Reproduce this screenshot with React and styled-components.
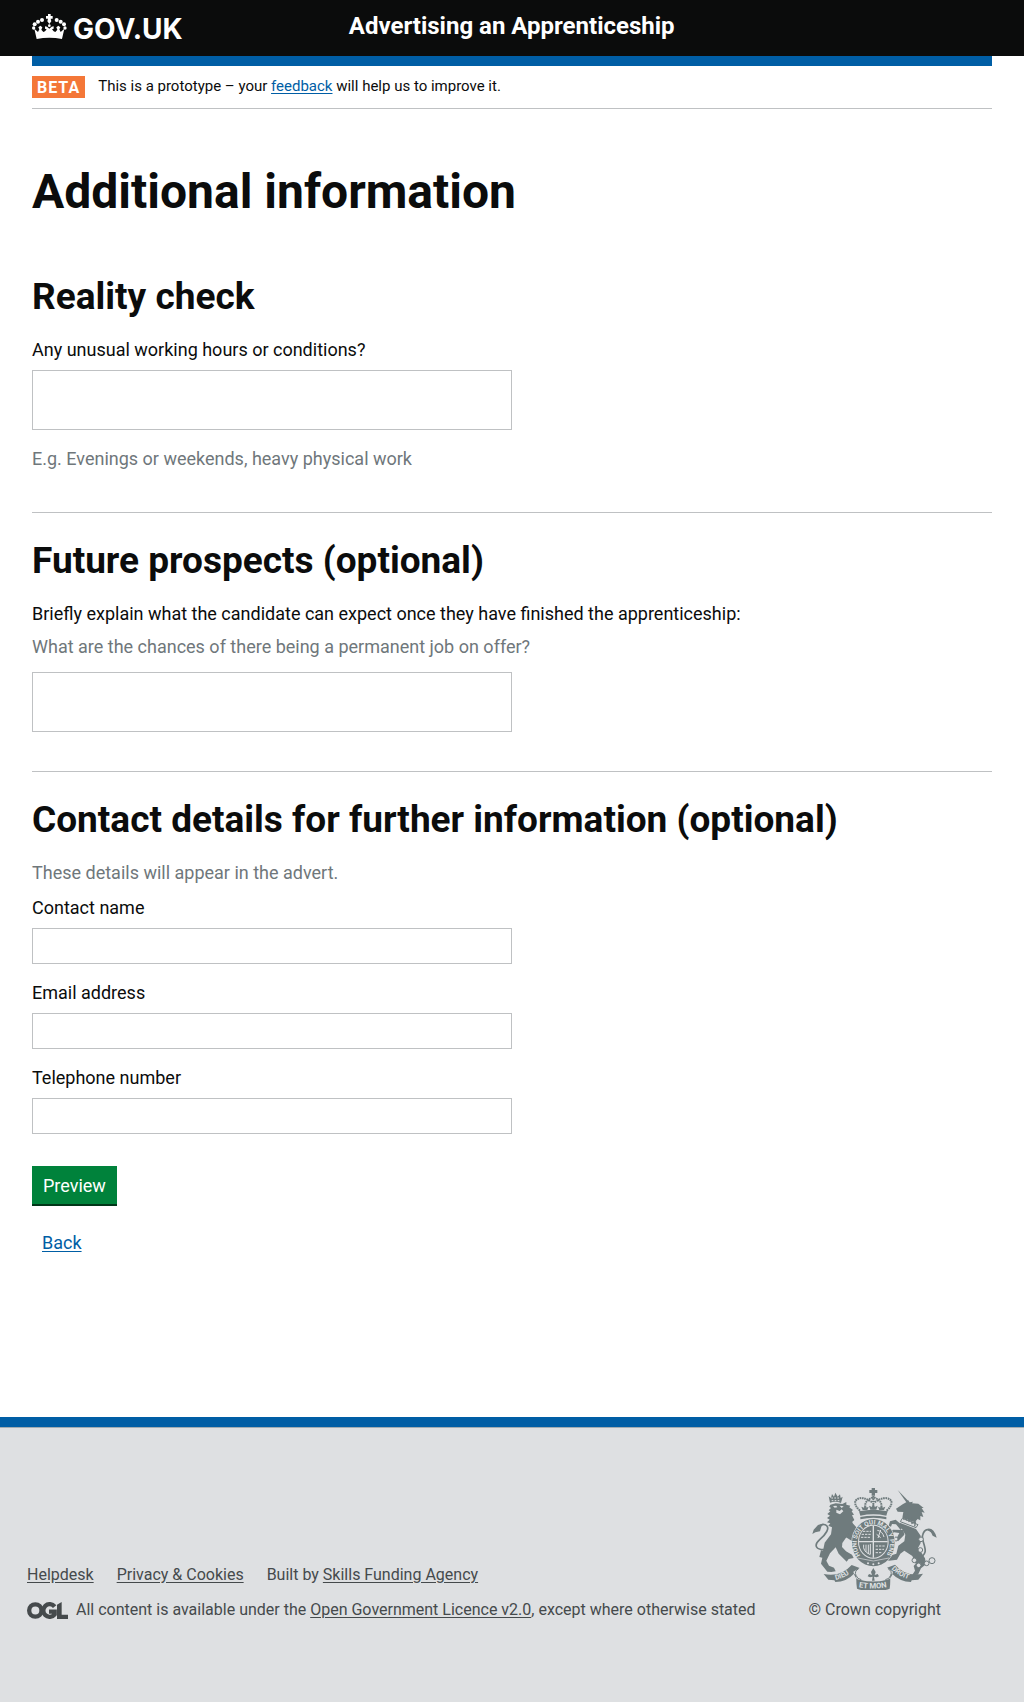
import React from "react";
import styled, { createGlobalStyle } from "styled-components";

const INK = "#0b0c0c";
const BLUE = "#005ea5";
const GREY = "#6f777b";
const RULE = "#bfc1c3";
const FOOT = "#dee0e2";
const CREST = "#6f7b7d";

const GlobalStyle = createGlobalStyle`
  *, *::before, *::after { box-sizing: border-box; }
  body {
    margin: 0;
    background: #fff;
    color: ${INK};
    font: 400 18px/24px Roboto, "Liberation Sans", sans-serif;
  }
  h1, h2, p { margin: 0; }
`;

const Header = styled.header`
  background: ${INK};
  color: #fff;
`;
const Container = styled.div`
  max-width: 960px;
  margin: 0 32px;
  @media (min-width: 1025px) { margin: 0 auto; }
`;
const HeaderInner = styled(Container)`
  display: grid;
  grid-template-columns: 33% 1fr;
  min-height: 56px;
  align-items: start;
`;
const Logo = styled.a`
  display: flex;
  align-items: flex-start;
  gap: 6px;
  padding-top: 14px;
  color: #fff;
  text-decoration: none;
  font: 700 28px/30px Inter, sans-serif;
`;
const ServiceName = styled.a`
  padding-top: 11px;
  color: #fff;
  font-size: 24px;
  font-weight: 700;
  line-height: 30px;
  text-decoration: none;
`;
const Banner = styled.div`
  display: flex;
  align-items: flex-start;
  gap: 13px;
  padding: 10px 0;
  border-top: 10px solid ${BLUE};
  border-bottom: 1px solid ${RULE};
  font-size: 15px;
  line-height: 20px;
`;
const Tag = styled.strong`
  padding: 2px 5px 0 5px;
  background: #f47738;
  color: #fff;
  font-size: 16px;
  line-height: 20px;
  letter-spacing: 1px;
`;
const Link = styled.a`
  color: ${(p) => (p.$plain ? "inherit" : BLUE)};
  text-underline-offset: 2px;
`;
const Title = styled.h1`
  margin-top: 58px;
  font-size: 48px;
  line-height: 50px;
`;
const Section = styled.section`
  padding: ${(p) => (p.$first ? "60px 0 41px" : "28px 0 39px")};
  border-bottom: ${(p) => (p.$last ? "0" : `1px solid ${RULE}`)};
`;
const Heading = styled.h2`
  margin-bottom: 21px;
  font-size: 37px;
  line-height: 40px;
`;
const Field = styled.div`
  display: grid;
  gap: 8px;
  & + & { margin-top: 17px; }
`;
const Label = styled.label`
  justify-self: start;
`;
const Hint = styled.p`
  margin: ${(p) => p.$margin || "0"};
  color: ${GREY};
`;
const Input = styled.input`
  width: 50%;
  height: 36px;
  padding: 5px;
  border: 1px solid ${RULE};
  border-radius: 0;
  background: #fff;
  color: ${INK};
  font: inherit;
`;
const TextArea = styled(Input).attrs({ as: "textarea" })`
  display: block;
  height: 60px;
  resize: none;
`;
const Actions = styled.div`
  display: grid;
  justify-items: start;
  gap: 25px;
  margin: -7px 0 162px;
`;
const Button = styled.button`
  height: 40px;
  padding: 0 11px;
  border: 0;
  background: #00823b;
  box-shadow: inset 0 -2px 0 #003618;
  color: #fff;
  font: inherit;
`;
const BackLink = styled(Link)`
  margin-left: 10px;
`;
const Footer = styled.footer`
  border-top: 10px solid ${BLUE};
  background: ${FOOT};
  color: #454a4c;
  font-size: 16px;
  line-height: 20px;
`;
const FooterInner = styled.div`
  display: flex;
  justify-content: space-between;
  align-items: flex-end;
  max-width: 1024px;
  margin: 0 auto;
  padding: 60px 83px 82px 27px;
`;
const FooterRule = styled.div`
  border-top: 1px solid #a1acb2;
`;
const Meta = styled.div`
  display: grid;
  gap: 15px;
`;
const LinkList = styled.ul`
  display: flex;
  gap: 23px;
  margin: 0;
  padding: 0;
  list-style: none;
`;
const Licence = styled.div`
  display: flex;
  align-items: center;
  gap: 8px;
`;
const Copyright = styled.div`
  display: grid;
  justify-items: center;
  gap: 10px;
`;

function Crown() {
  return (
    <svg width="35" height="26" viewBox="96 42 105 78" fill="#fff" aria-hidden="true">
      <path d="M144 42h8v6h6v8h-6l2 8-6 8-6-8 2-8h-6v-8h6z" />
      <circle cx="126" cy="60" r="6" />
      <circle cx="114" cy="65" r="6" />
      <circle cx="104" cy="73" r="6" />
      <circle cx="101" cy="84" r="5" />
      <circle cx="170" cy="60" r="6" />
      <circle cx="182" cy="65" r="6" />
      <circle cx="192" cy="73" r="6" />
      <circle cx="195" cy="84" r="5" />
      <circle cx="148" cy="77" r="4" />
      <path d="M103 86l11 10 4-8-3-6 6-5 6 5-3 7 6 7 5-2 5-6-5-2v-7l6 1 7 6 7-6 6-1v7l-5 2 5 6 5 2 6-7-3-7 6-5 6 5-3 6 4 8 11-10-7 31q-38-8-76 0z" />
    </svg>
  );
}

function OglMark() {
  return (
    <svg width="41" height="17" viewBox="0 0 123 51" fill="none" stroke="#454a4c" strokeWidth="13" role="img" aria-label="Open Government Licence">
      <circle cx="25" cy="25.500" r="18.500" />
      <path d="M83 14A19 19 0 1 0 83 37V29H66" />
      <path d="M90 8L104 0V38H123V51H90Z" fill="#454a4c" stroke="none" />
    </svg>
  );
}

function RoyalArms() {
  return (
    <svg width="125" height="102" viewBox="66 54 375 306" fill={CREST} role="img" aria-label="Royal coat of arms">
      <defs>
        <path id="garter" d="M211 256A50 57 0 1 1 289 256" />
        <path id="dieu" d="M137 330Q168 324 191 299" />
        <path id="etmon" d="M206 352Q250 360 296 350" />
        <path id="droit" d="M304 297Q328 322 366 330" />
      </defs>
      {/* imperial crown */}
      <path d="M245 54h10v6h7v9h-7v8h-10v-8h-7v-9h7zM211 137l-4-13q43-10 86 0l-4 13q-39-8-78 0zM211 141q39-8 78 0v7q-39-9-78 0z" />
      <path d="M210 122C174 90 212 70 246 97M290 122C326 90 288 70 254 97M229 118C220 100 231 89 249 82M271 118C280 100 269 89 251 82M250 78V120" fill="none" stroke={CREST} strokeWidth="6" strokeDasharray="5 2" />
      <path d="M218 120l-4-10 8 3 2-7 5 7 7-3-4 10zM241 119l-4-12 9 4 4-11 4 11 9-4-4 12zM268 120l-4-10 7 3 5-7 2 7 8-3-4 10z" />
      {/* lion */}
      <path d="M120 98l-4-19 7 5 3-12 6 8 4-12 7 12 7-7 2 11 6-4-5 19q-16-7-33-1z" />
      <path d="M124 84h27M125 92h27" stroke={FOOT} strokeWidth="3" strokeDasharray="5 4" />
      <path d="M121 104l16-4 20 2 12-6 0 8 12 3-3 5 11 8-4 4 7 10-6 2 7 14-6 5 1 12 11 14 5 22-9-3-3 20-12-17-11-1-12 17-1 12 12 13 18 10 5 10-15 3-6 8-24-24-9-19-17 18-11 22 8 15 15 6 5 11-13 2-12-1-19-24 4-18-9-2 5-20 6 1 5-24 19-25 3-21-11-5 6-7-10-3 8-8-8-5 9-7-8-5 9-8-5-3 7-7-5-4z" />
      <path d="M129 108l10-1 3 5-8 1zM149 107l12 2-6 5zM139 119l10 4 6-5 5 6-10 9-11-5z" fill={FOOT} />
      <path d="M184 155l17 19-9 12-12-7zM171 190l20 12-4 12-19-12z" />
      <path d="M110 238C77 242 70 226 89 209C108 193 120 174 109 166Q100 159 84 171" fill="none" stroke={CREST} strokeWidth="5" />
      <path d="M67 192l4-13 13-14 17-5-7 10-4 14-14 3z" />
      {/* unicorn */}
      <path d="M323 60l32 33-5 5z" />
      <path d="M350 96l4-6 5 7 10-2-3 5 19 1 16 13-6 0 9 14-9-2 5 15-9-3 0 13-8-4-9 10-37-14 3-17-17-1-5-9 20-13z" />
      <path d="M337 145l47 19-6 9-47-18z" fill={FOOT} stroke={CREST} strokeWidth="3" />
      <path d="M341 149l1-10 7 10 4-9 4 13 8-7 1 14 10-4-2 13" fill="none" stroke={CREST} strokeWidth="4" />
      <path d="M329 158l49 19 14 20 0 22-8 15 7 9 14 22 3 18-15 12-9 19-18 2 9-14-4-14 6-7-10-23-24-16-12 9-10 18-24 3-14-4 14-10 22-7 6-24 18-13 3-20-15-26z" />
      <path d="M340 169l-23-20-17 5-4 13 7 3 3-8 12 1 14 17zM340 180l-31-1-12 11 7 6 8-9 16 2-9 17 5 8 19-20z" />
      <path d="M383 265C428 251 391 216 398 195Q406 168 427 187" fill="none" stroke={CREST} strokeWidth="5" />
      <path d="M409 177q22-7 31 26l-12-6-5-10z" />
      <g fill={FOOT} stroke={CREST} strokeWidth="3">
        <circle cx="393" cy="208" r="7" />
        <circle cx="391" cy="240" r="7" />
        <circle cx="373" cy="271" r="7" />
        <circle cx="386" cy="286" r="7" />
        <circle cx="410" cy="280" r="7" />
        <circle cx="426" cy="272" r="9" />
        <circle cx="318" cy="207" r="6" />
      </g>
      {/* garter and shield */}
      <ellipse cx="250" cy="218" rx="66" ry="73" fill={FOOT} />
      <ellipse cx="250" cy="218" rx="64" ry="71" />
      <ellipse cx="250" cy="215" rx="46" ry="51" fill={FOOT} />
      <ellipse cx="250" cy="215" rx="43" ry="48" />
      <path d="M250 167V263M207 215H293" stroke={FOOT} strokeWidth="4" />
      <path d="M219 184h24M215 193h28M213 202h30M257 228h29M257 238h25M257 248h18" stroke={FOOT} strokeWidth="3" strokeDasharray="7 3" />
      <path d="M262 181q15 2 20 20M260 193l12 10M272 180l-8 24M221 224q-4 20 20 30M228 224v22M235 224v28M241 222v31" fill="none" stroke={FOOT} strokeWidth="3" />
      <path d="M203 264l47 9 47-9" fill="none" stroke={FOOT} strokeWidth="2" />
      <circle cx="234" cy="280" r="3" fill={FOOT} />
      <circle cx="250" cy="283" r="3" fill={FOOT} />
      <circle cx="266" cy="280" r="3" fill={FOOT} />
      {/* motto scroll */}
      <path d="M101 312q50 11 84-27l24 9-19 11q5 25 22 25 38 9 76 0 18-3 21-25l-18-12 24-9q33 38 84 27l-14 18-20 2-2 5q-33-1-57-25l-6 5q2 21-1 40-49 18-98 0-3-20-2-40l-7-5q-23 25-56 25l-3-5-18-2z" />
      <path d="M206 296q-14 8-8 20 4 12 16 13 36 8 72 0 12-1 16-13 6-12-8-20z" fill={FOOT} />
      <path d="M206 296q-14 8-8 20 4 12 16 13M294 296q14 8 8 20-4 12-16 13" fill="none" stroke={CREST} strokeWidth="3" />
      <path d="M250 294l7 12-3 9 9-3 4 7-7 3-8-2 2 12h-8l2-12-8 2-7-3 4-7 9 3-3-9z" />
      <g fill={FOOT} fontFamily="Roboto, sans-serif" fontWeight="700" fontSize="19" aria-hidden="true">
        <text><textPath href="#garter">HONI SOIT QUI MAL Y PENSE</textPath></text>
        <text fontSize="21"><textPath href="#dieu">DIEU</textPath></text>
        <text fontSize="23"><textPath href="#etmon">ET MON</textPath></text>
        <text fontSize="21"><textPath href="#droit">DROIT</textPath></text>
      </g>
    </svg>
  );
}

const CONTACT_FIELDS = [
  { id: "contact-name", label: "Contact name", type: "text" },
  { id: "email", label: "Email address", type: "email" },
  { id: "telephone", label: "Telephone number", type: "tel" },
];

export default function App() {
  return (
    <>
      <GlobalStyle />
      <Header>
        <HeaderInner>
          <Logo href="#"><Crown />GOV.UK</Logo>
          <ServiceName href="#">Advertising an Apprenticeship</ServiceName>
        </HeaderInner>
      </Header>
      <Container as="main">
        <Banner>
          <Tag>BETA</Tag>
          <p>This is a prototype – your <Link href="#">feedback</Link> will help us to improve it.</p>
        </Banner>
        <Title>Additional information</Title>
        <form onSubmit={(e) => e.preventDefault()}>
          <Section $first>
            <Heading>Reality check</Heading>
            <Field>
              <Label htmlFor="conditions">Any unusual working hours or conditions?</Label>
              <TextArea id="conditions" aria-describedby="conditions-hint" />
            </Field>
            <Hint id="conditions-hint" $margin="17px 0 0">E.g. Evenings or weekends, heavy physical work</Hint>
          </Section>
          <Section>
            <Heading>Future prospects (optional)</Heading>
            <Label htmlFor="prospects">Briefly explain what the candidate can expect once they have finished the apprenticeship:</Label>
            <Hint id="prospects-hint" $margin="9px 0 13px">What are the chances of there being a permanent job on offer?</Hint>
            <TextArea id="prospects" aria-describedby="prospects-hint" />
          </Section>
          <Section $last>
            <Heading>Contact details for further information (optional)</Heading>
            <Hint $margin="0 0 11px">These details will appear in the advert.</Hint>
            {CONTACT_FIELDS.map((f) => (
              <Field key={f.id}>
                <Label htmlFor={f.id}>{f.label}</Label>
                <Input id={f.id} type={f.type} />
              </Field>
            ))}
          </Section>
          <Actions>
            <Button type="submit">Preview</Button>
            <BackLink href="#">Back</BackLink>
          </Actions>
        </form>
      </Container>
      <Footer>
        <FooterRule />
        <FooterInner>
          <Meta>
            <LinkList>
              <li><Link $plain href="#">Helpdesk</Link></li>
              <li><Link $plain href="#">Privacy &amp; Cookies</Link></li>
              <li>Built by <Link $plain href="#">Skills Funding Agency</Link></li>
            </LinkList>
            <Licence>
              <OglMark />
              <p>All content is available under the <Link $plain href="#">Open Government Licence v2.0</Link>, except where otherwise stated</p>
            </Licence>
          </Meta>
          <Copyright>
            <RoyalArms />
            <span>© Crown copyright</span>
          </Copyright>
        </FooterInner>
      </Footer>
    </>
  );
}
